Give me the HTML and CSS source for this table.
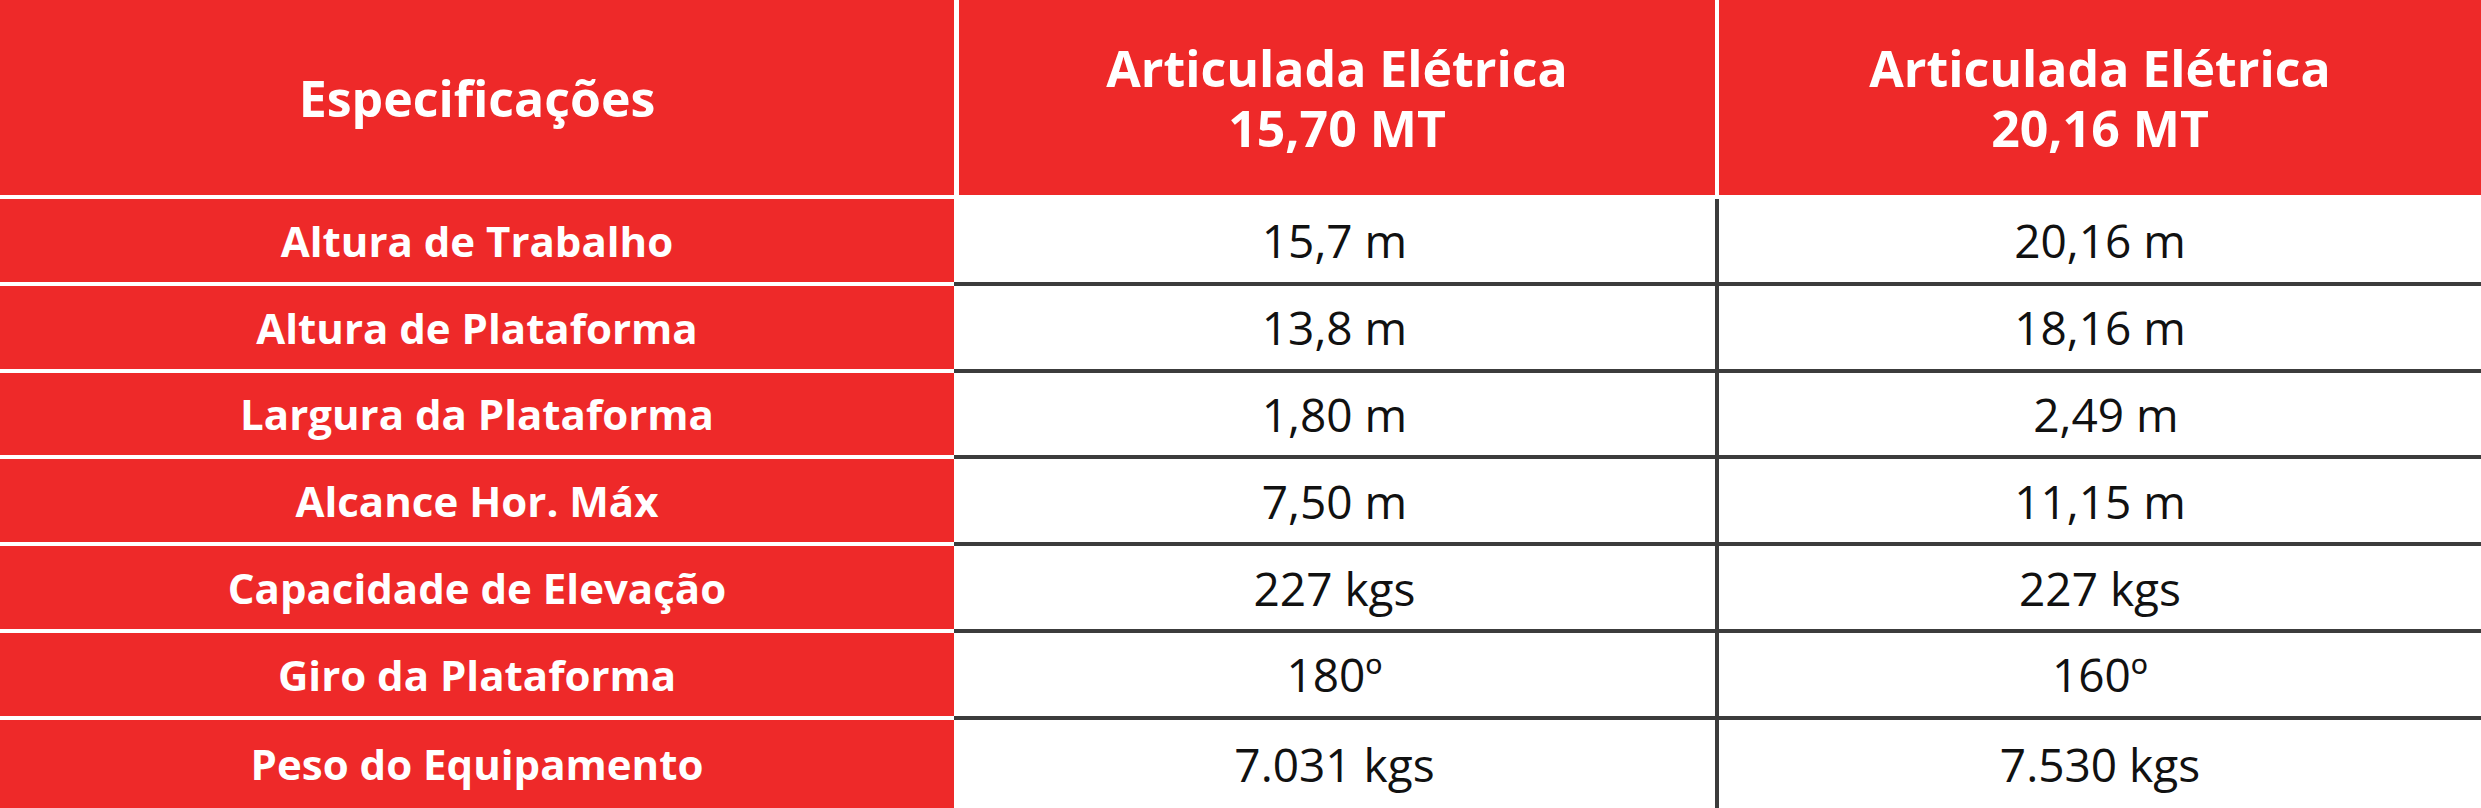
FILE: index.html
```html
<!DOCTYPE html>
<html lang="pt">
<head>
<meta charset="utf-8">
<title>Especificações</title>
<link rel="stylesheet" href="styles.css">
</head>
<body>
<div class="spec">
  <div class="hd hd-1">Especificações</div>
  <div class="hd hd-2">Articulada Elétrica<br>15,70 MT</div>
  <div class="hd hd-3">Articulada Elétrica<br>20,16 MT</div>

  <div class="lb">Altura de Trabalho</div>
  <div class="vl vl-a">15,7 m</div>
  <div class="vl vl-b">20,16 m</div>

  <div class="lb">Altura de Plataforma</div>
  <div class="vl vl-a">13,8 m</div>
  <div class="vl vl-b">18,16 m</div>

  <div class="lb">Largura da Plataforma</div>
  <div class="vl vl-a">1,80 m</div>
  <div class="vl vl-b">&nbsp;2,49 m</div>

  <div class="lb">Alcance Hor. Máx</div>
  <div class="vl vl-a">7,50 m</div>
  <div class="vl vl-b">11,15 m</div>

  <div class="lb">Capacidade de Elevação</div>
  <div class="vl vl-a">227 kgs</div>
  <div class="vl vl-b">227 kgs</div>

  <div class="lb">Giro da Plataforma</div>
  <div class="vl vl-a">180º</div>
  <div class="vl vl-b">160º</div>

  <div class="lb last">Peso do Equipamento</div>
  <div class="vl vl-a last">7.031 kgs</div>
  <div class="vl vl-b last">7.530 kgs</div>
</div>
</body>
</html>
```
FILE: styles.css
```css
* { box-sizing: border-box; }
html, body { margin: 0; padding: 0; background: #fff; }
body { font-family: "Open Sans", "Liberation Sans", sans-serif; }

.spec {
  width: 2481px;
  height: 808px;
  display: grid;
  grid-template-columns: 954px 765px 762px;
  grid-template-rows: 199px repeat(6, 86.8px) 1fr;
  background: #fff;
}

.hd {
  background: #ee2929;
  color: #fff;
  font-weight: 700;
  font-size: 50px;
  line-height: 60px;
  text-align: center;
  display: flex;
  align-items: center;
  justify-content: center;
  border-bottom: 4px solid #fff;
}
.hd-1 { border-right: 1px solid #ee2929; margin-right: -1px; }
.hd-2 { border-left: 5px solid #fff; border-right: 4px solid #fff; }

.lb {
  background: #ee2929;
  color: #fff;
  font-weight: 700;
  font-size: 42px;
  display: flex;
  align-items: center;
  justify-content: center;
  border-bottom: 4px solid #fff;
}

.vl {
  color: #111;
  font-weight: 400;
  font-size: 46px;
  display: flex;
  align-items: center;
  justify-content: center;
  border-bottom: 4px solid #3c3c3c;
}
.vl-a { border-right: 4px solid #3c3c3c; }

.last { border-bottom: 0; }
```
